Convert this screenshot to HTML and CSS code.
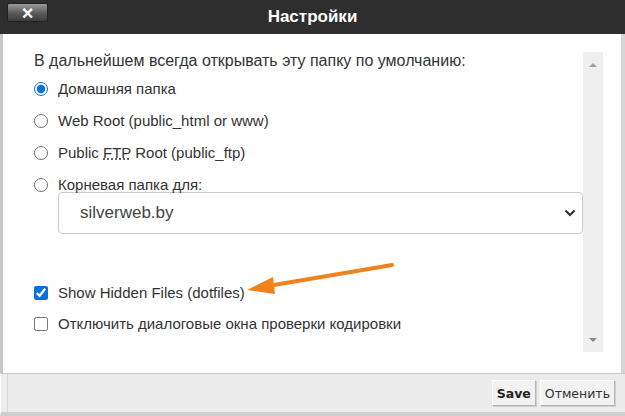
FILE: index.html
```html
<!DOCTYPE html>
<html lang="ru">
<head>
    <meta charset="UTF-8">
    <title>Настройки</title>
    <link rel="stylesheet" href="styles.css">
</head>
<body>
    <div class="dialog">
        <div class="dialog-header">
            <button class="close-btn" type="button">&times;</button>
            <h1>Настройки</h1>
        </div>

        <div class="dialog-body">
            <div class="content">
                <p class="intro">В дальнейшем всегда открывать эту папку по умолчанию:</p>

                <label class="option">
                    <input type="radio" name="dir" checked>
                    <span>Домашняя папка</span>
                </label>
                <label class="option">
                    <input type="radio" name="dir">
                    <span>Web Root (public_html or www)</span>
                </label>
                <label class="option">
                    <input type="radio" name="dir">
                    <span>Public <abbr title="File Transfer Protocol">FTP</abbr> Root (public_ftp)</span>
                </label>
                <label class="option option-last">
                    <input type="radio" name="dir">
                    <span>Корневая папка для:</span>
                </label>

                <div class="select-box">
                    <span>silverweb.by</span>
                    <svg class="chevron" width="12" height="8" viewBox="0 0 12 8">
                        <path d="M1.5 1.5 L6 6 L10.5 1.5" fill="none" stroke="#333" stroke-width="2.2"/>
                    </svg>
                </div>

                <label class="option check-first">
                    <input type="checkbox" checked>
                    <span>Show Hidden Files (dotfiles)</span>
                </label>
                <label class="option">
                    <input type="checkbox">
                    <span>Отключить диалоговые окна проверки кодировки</span>
                </label>
            </div>

            <div class="scrollbar">
                <span class="arrow-up"></span>
                <span class="arrow-down"></span>
            </div>
        </div>

        <div class="dialog-footer">
            <button class="btn btn-save" type="button">Save</button>
            <button class="btn" type="button">Отменить</button>
        </div>

        <!-- pointer arrow drawn over the dialog -->
        <svg class="pointer" width="625" height="416" viewBox="0 0 625 416">
            <line x1="392" y1="265" x2="268" y2="286" stroke="#f0821e" stroke-width="4" stroke-linecap="round"/>
            <polygon points="247,290 273,277 275,294" fill="#f0821e"/>
        </svg>
    </div>
</body>
</html>
```

FILE: styles.css
```css
body {
    margin: 0;
    font-family: "Liberation Sans", Arial, sans-serif;
    background-color: #fff;
}

.dialog {
    position: relative;
    width: 625px;
    height: 416px;
    display: flex;
    flex-direction: column;
    overflow: hidden;
}

.dialog-header {
    position: relative;
    height: 34px;
    background-color: #2e2e2e;
    display: flex;
    align-items: center;
    justify-content: center;
}

.dialog-header h1 {
    margin: 0;
    color: #fff;
    font-size: 17px;
    font-weight: bold;
}

.close-btn {
    position: absolute;
    left: 7px;
    top: 3px;
    width: 41px;
    height: 19px;
    padding: 0;
    border: 1px solid #222;
    border-radius: 2px;
    background: linear-gradient(#9a9a9a, #5a5a5a 55%, #3c3c3c);
    color: #fff;
    font-family: "Liberation Sans", Arial, sans-serif;
    font-size: 20px;
    font-weight: bold;
    line-height: 16px;
}

.dialog-body {
    flex: 1;
    display: flex;
    border-left: 3px solid #c8c8c8;
    border-right: 4px solid #d6d6d6;
    background-color: #fff;
}

.content {
    width: 549px;
    padding-left: 31px;
    padding-top: 17px;
    color: #333;
    font-size: 15px;
}

.intro {
    margin: 0 0 8px;
    font-size: 16px;
    line-height: 20px;
}

.option {
    display: flex;
    align-items: center;
    height: 20px;
    margin-bottom: 12px;
    line-height: 20px;
}

.option input {
    width: 14px;
    height: 14px;
    margin: 0 10px 0 0;
    accent-color: #0b6fe0;
}

.option-last {
    margin-bottom: 0;
}

abbr {
    text-decoration: underline dotted;
}

.select-box {
    margin-left: 24px;
    margin-top: -3px;
    height: 40px;
    border: 1px solid #c9c9c9;
    border-radius: 4px;
    display: flex;
    align-items: center;
    justify-content: space-between;
    padding: 0 6px 0 21px;
    font-size: 17px;
    color: #444;
}

.check-first {
    margin-top: 49px;
    margin-bottom: 11px;
}

.scrollbar {
    position: relative;
    width: 20px;
    margin-top: 18px;
    height: 300px;
    background-color: #efefef;
}

.arrow-up,
.arrow-down {
    position: absolute;
    left: 6px;
    width: 0;
    height: 0;
    border-left: 4px solid transparent;
    border-right: 4px solid transparent;
}

.arrow-up {
    top: 11px;
    border-bottom: 4px solid #a0a0a0;
}

.arrow-down {
    bottom: 10px;
    border-top: 4px solid #8a8a8a;
}

.dialog-footer {
    height: 38px;
    background-color: #ececec;
    border-top: 1px solid #c8c8c8;
    border-left: 1px solid #fff;
    border-bottom: 4px solid #cfcfcf;
    box-shadow: inset 6px 0 0 #ececec, inset 7px 0 0 #d6d6d6;
    display: flex;
    justify-content: flex-end;
    align-items: center;
    gap: 4px;
    padding-right: 10px;
}

.btn {
    height: 26px;
    padding: 0 4px;
    background-color: #f2f2f2;
    border: 1px solid;
    border-color: #fff #b4b4b4 #b4b4b4 #fff;
    box-shadow: 1px 1px 0 #d0d0d0;
    font-family: "DejaVu Sans", Verdana, sans-serif;
    font-size: 12.5px;
    color: #333;
}

.btn-save {
    font-weight: bold;
    color: #222;
}

.pointer {
    position: absolute;
    left: 0;
    top: 0;
    pointer-events: none;
}
```
